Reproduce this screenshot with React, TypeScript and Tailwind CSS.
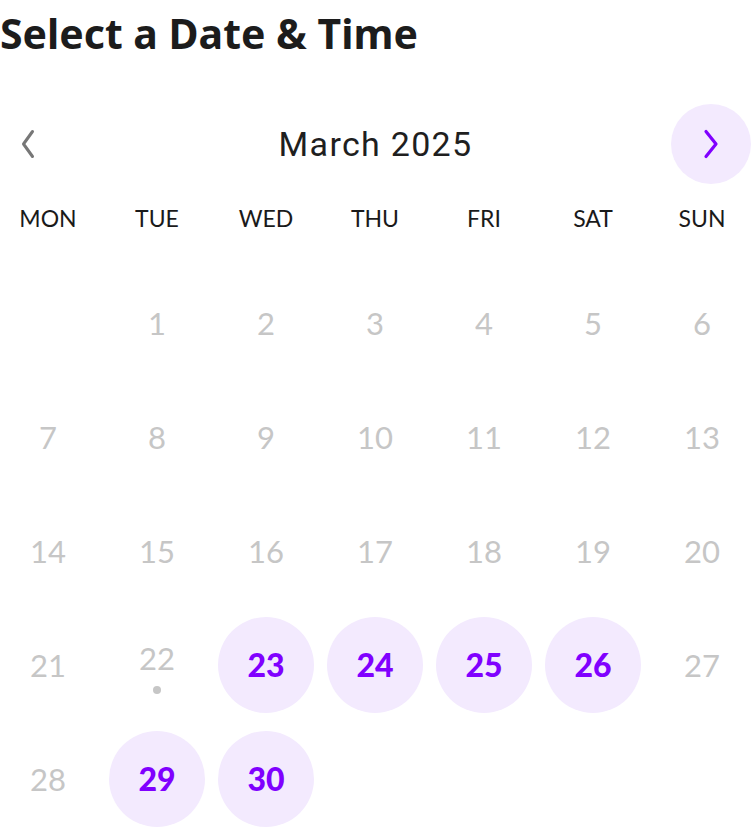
import React from "react";

const purple = "text-[#8000ff]";

type Cell = { n?: number; active?: boolean; dot?: boolean };

const cells: Cell[] = [
  {},
  ...Array.from({ length: 30 }, (_, i) => {
    const n = i + 1;
    return {
      n,
      active: [23, 24, 25, 26, 29, 30].includes(n),
      dot: n === 22,
    };
  }),
];

export default function App() {
  const days = ["MON", "TUE", "WED", "THU", "FRI", "SAT", "SUN"];
  return (
    <div className="w-[751px] h-[828px] bg-white overflow-hidden flex flex-col">
      <h1
        className="h-[64px] leading-[66px] text-[41px] font-bold text-[#1c1c1c] tracking-[0px]"
        style={{ fontFamily: '"Noto Sans", sans-serif' }}
      >
        Select a Date &amp; Time
      </h1>
      <div className="mt-[40px] h-[80px] grid grid-cols-[80px_1fr_80px] items-center">
        <button className="w-[56px] h-[80px] flex items-center justify-center">
          <svg width="14" height="30" viewBox="0 0 14 30" fill="none">
            <path d="M11.5 2.5 L2.5 15 L11.5 27.5" stroke="#777" strokeWidth="3" strokeLinecap="round" strokeLinejoin="round" />
          </svg>
        </button>
        <div
          className="text-center text-[34px] text-[#1f1f1f] tracking-[1.3px]"
          style={{ fontFamily: "Roboto, sans-serif" }}
        >
          March 2025
        </div>
        <button className="w-[80px] h-[80px] rounded-full bg-[#f3eafe] flex items-center justify-center">
          <svg width="18" height="30" viewBox="0 0 18 30" fill="none">
            <path d="M4 2.5 L14 15 L4 27.5" stroke="#8000ff" strokeWidth="3.2" strokeLinecap="round" strokeLinejoin="round" />
          </svg>
        </button>
      </div>
      <div
        className="mt-[16px] grid grid-cols-[repeat(7,96px)] gap-x-[13px]"
        style={{ fontFamily: "Lato, sans-serif" }}
      >
        {days.map((d) => (
          <div key={d} className="h-[36px] flex items-center justify-center text-[23px] text-[#1a1a1a]">
            {d}
          </div>
        ))}
      </div>
      <div
        className="mt-[39px] grid grid-cols-[repeat(7,96px)] gap-x-[13px] gap-y-[18px]"
        style={{ fontFamily: "Lato, sans-serif" }}
      >
        {cells.map((c, i) => (
          <div key={i} className="h-[96px] flex items-center justify-center">
            {c.n === undefined ? null : c.active ? (
              <div className={`w-[96px] h-[96px] rounded-full bg-[#f3eafe] flex items-center justify-center text-[32px] font-black ${purple}`}>
                {c.n}
              </div>
            ) : c.dot ? (
              <div className="flex flex-col items-center mt-[3px]">
                <span className="text-[31px] leading-[38px] text-[#c6c6c6]">{c.n}</span>
                <span className="mt-[9px] w-[8px] h-[8px] rounded-full bg-[#c6c6c6]" />
              </div>
            ) : (
              <div className="text-[31px] text-[#c6c6c6]">{c.n}</div>
            )}
          </div>
        ))}
      </div>
    </div>
  );
}
